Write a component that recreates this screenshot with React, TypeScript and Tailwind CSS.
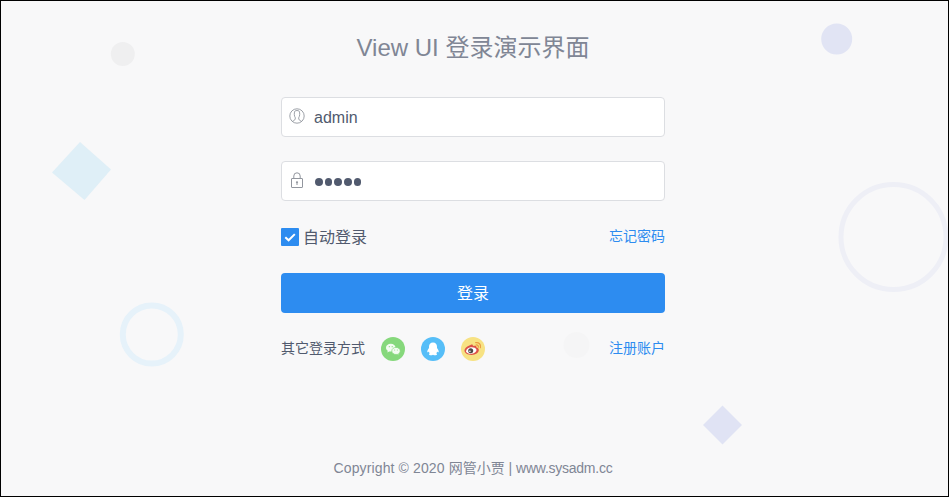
import React from "react";

const FONT = "font-['Liberation_Sans','Noto_Sans_CJK_SC',sans-serif]";

function Backdrop() {
  return (
    <svg className="absolute inset-0 h-full w-full" viewBox="1 1 947 495" aria-hidden="true">
      <circle cx="122.8" cy="54" r="12" fill="#efeff0" />
      <circle cx="836.7" cy="39" r="15.5" fill="#e1e4f4" />
      <path d="M80 142 L111 169.500 L84.500 200 L52 172.500Z" fill="#dfeff7" />
      <circle cx="151.800" cy="334.500" r="29" fill="none" stroke="#e6f2fa" strokeWidth="6" />
      <circle cx="893.500" cy="237" r="52.500" fill="none" stroke="#eeeff6" strokeWidth="5" />
      <circle cx="576.500" cy="345" r="13" fill="#f5f5f6" />
      <path d="M722.500 405.500 L742 425 L722.500 444.500 L703 425Z" fill="#e0e3f4" />
    </svg>
  );
}

function PersonIcon() {
  return (
    <svg className="-mt-0.5 h-4 w-4" viewBox="0 0 16 16" fill="none" stroke="#92969e" strokeWidth="0.9">
      <circle cx="8" cy="8" r="7.2" />
      <path d="M5.800 3.200C4.900 5.400 5.200 8 6.300 9.800C6.500 11.600 5.600 12.400 3.600 13.200M10.200 3.200C11.100 5.400 10.800 8 9.700 9.800C9.500 11.600 10.400 12.400 12.400 13.200M5.800 3.200C6.700 2.300 9.300 2.300 10.200 3.200" />
    </svg>
  );
}

function LockIcon() {
  return (
    <svg className="-mt-0.5 h-4 w-4" viewBox="0 0 16 16" fill="none" stroke="#92969e" strokeWidth="1">
      <rect x="2.500" y="6.500" width="11" height="9" rx="0.4" />
      <path d="M4.800 6.500V4a3.200 3.200 0 0 1 6.400 0V6.500M8 10v3" />
      <circle cx="8" cy="10.200" r="0.6" fill="#92969e" />
    </svg>
  );
}

function WechatIcon() {
  return (
    <svg className="h-6 w-6" viewBox="0 0 24 24">
      <circle cx="12" cy="12" r="12" fill="#86d87c" />
      <path d="M9.800 6.800C7.100 6.800 5 8.500 5 10.700c0 1.300.7 2.400 1.800 3.100l-.5 1.600 1.900-1c.5.200 1.100.2 1.600.2 2.700 0 4.700-1.700 4.700-3.900s-2-3.900-4.700-3.900Z" fill="#f4fcf2" />
      <path d="M15 10.400c-2.400 0-4.200 1.500-4.200 3.500s1.800 3.600 4.200 3.600c.5 0 .9-.1 1.300-.2l1.700.9-.4-1.500c1-.6 1.600-1.600 1.600-2.800 0-2-1.800-3.500-4.200-3.500Z" fill="#f4fcf2" stroke="#86d87c" strokeWidth="0.700" />
      <g fill="#86d87c">
        <circle cx="8.300" cy="9.700" r="0.600" />
        <circle cx="11.200" cy="9.700" r="0.600" />
        <circle cx="13.700" cy="13.100" r="0.500" />
        <circle cx="16.300" cy="13.100" r="0.500" />
      </g>
    </svg>
  );
}

function QqIcon() {
  return (
    <svg className="h-6 w-6" viewBox="0 0 24 24">
      <circle cx="12" cy="12" r="12" fill="#56bef8" />
      <path d="M12 5.500c-2.600 0-4 1.900-4 4.300v1.100c-.9 1.200-1.900 2.800-1.700 4.100.1.600.8.200 1.400-.6.200.8.600 1.400 1.200 1.900-.8.300-1.100.8-.9 1.300.4 1 3.100.8 4 .1.900.7 3.600.9 4-.1.200-.5-.1-1-.9-1.300.6-.5 1-1.100 1.200-1.900.6.800 1.300 1.200 1.400.6.200-1.300-.8-2.900-1.700-4.100V9.800c0-2.400-1.400-4.300-4-4.300Z" fill="#fff" />
    </svg>
  );
}

function WeiboIcon() {
  return (
    <svg className="h-6 w-6" viewBox="0 0 24 24">
      <circle cx="12" cy="12" r="12" fill="#f7e283" />
      <path d="M10 7.700c1.200-.5 2.200-.1 1.900 1.400 2-.8 3.900-.5 3.400 1.100 1.500.5 2.500 1.400 2.500 2.800 0 2.700-3.300 4.900-7.200 4.900S3.500 16 3.500 13.500c0-2.400 3.800-5 6.500-5.800Z" fill="#dd5147" />
      <ellipse cx="10.300" cy="13.500" rx="5.200" ry="3.300" transform="rotate(-7 10.300 13.500)" fill="#fff" />
      <circle cx="9.700" cy="13.800" r="2.500" fill="#4f4946" />
      <circle cx="8.900" cy="14.300" r="0.800" fill="#fff" />
      <path d="M14.700 5.700c3-.8 5.700 2 4.700 5M15.100 8c1.400-.4 2.600.9 2.200 2.200" fill="none" stroke="#eb9b42" strokeWidth="1.200" strokeLinecap="round" />
    </svg>
  );
}

export default function App() {
  return (
    <div className={`relative h-[497px] w-[949px] overflow-hidden border border-black bg-[#f8f8f9] text-[#515a6e] ${FONT}`}>
      <Backdrop />
      <main className="relative ml-[280px] flex w-[384px] flex-col">
        <h1 className="mt-[27px] h-10 whitespace-nowrap text-center text-2xl leading-10 text-[#808695]">
          View UI 登录演示界面
        </h1>
        <label className="mt-[29px] flex h-10 items-center rounded border border-[#dcdee2] bg-white pl-[7px]">
          <PersonIcon />
          <input className="ml-[9px] w-80 bg-transparent pt-0.5 text-base outline-none" defaultValue="admin" />
        </label>
        <label className="mt-6 flex h-10 items-center rounded border border-[#dcdee2] bg-white pl-[7px]">
          <LockIcon />
          <span className="ml-[10px] flex gap-[2.200px] pt-[2px]">
            {[0, 1, 2, 3, 4].map((dot) => (
              <span key={dot} className="h-[7.500px] w-[7.500px] rounded-full bg-[#515a6e]" />
            ))}
          </span>
        </label>
        <div className="mt-6 flex h-6 items-center justify-between">
          <label className="flex items-center text-base leading-6">
            <span className="mr-1 flex h-[18px] w-[18px] items-center justify-center rounded-[1px] bg-[#2d8cf0]">
              <svg className="h-3 w-3" viewBox="0 0 12 12" fill="none" stroke="white" strokeWidth="2">
                <path d="M1.300 6.200 4.600 9.300 10.800 3.100" />
              </svg>
            </span>
            <span className="pt-0.5">自动登录</span>
          </label>
          <a className="pb-0.5 text-sm leading-6 text-[#2d8cf0]">忘记密码</a>
        </div>
        <button className="mt-6 h-10 rounded bg-[#2d8cf0] pt-0.5 text-base text-white">登录</button>
        <div className="mt-6 flex h-6 items-center">
          <span className="pb-0.5 text-sm leading-6">其它登录方式</span>
          <div className="ml-4 flex gap-4">
            <WechatIcon />
            <QqIcon />
            <WeiboIcon />
          </div>
          <a className="ml-auto pb-0.5 text-sm leading-6 text-[#2d8cf0]">注册账户</a>
        </div>
        <footer className="mt-[95px] whitespace-nowrap text-center text-sm leading-6 text-[#808695]">
          <span className="tracking-[0.12px]">Copyright © 2020 </span>
          网管小贾 | <span className="tracking-[-0.250px]">www.sysadm.cc</span>
        </footer>
      </main>
    </div>
  );
}
